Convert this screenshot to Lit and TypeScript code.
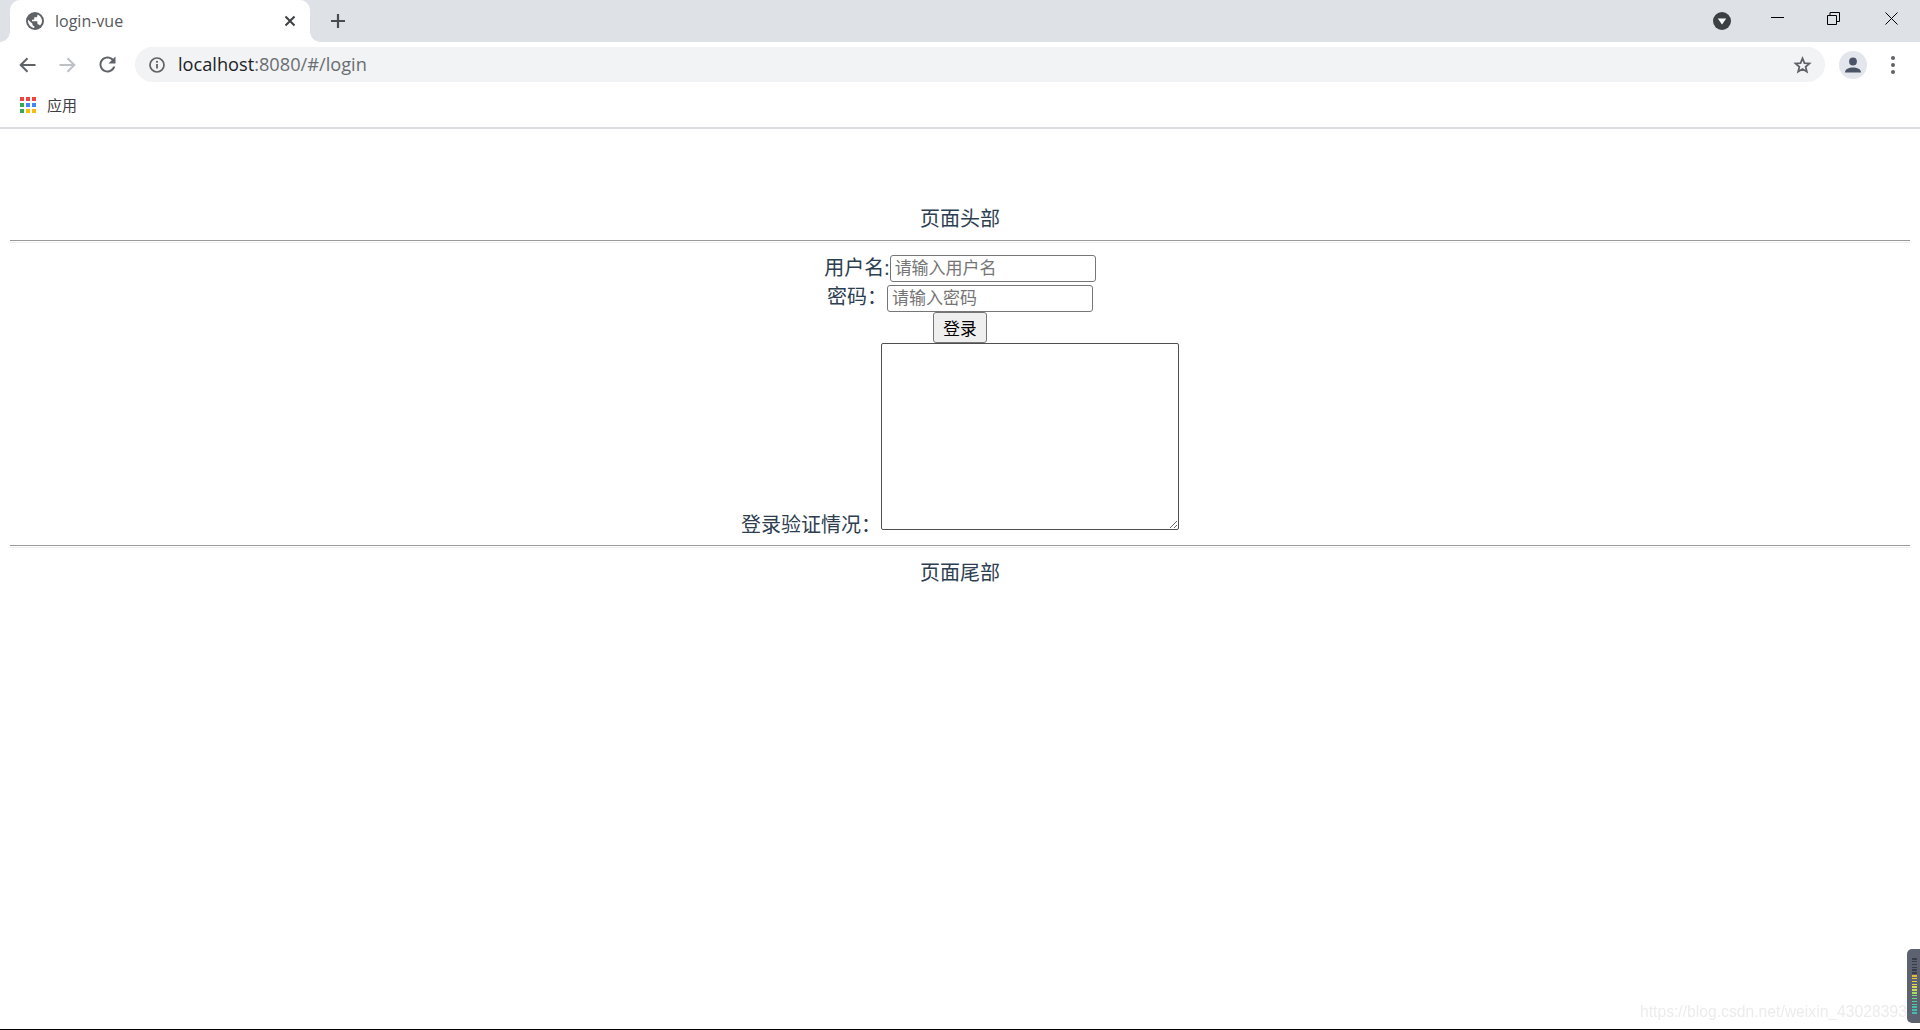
import { LitElement, html, css, svg } from "lit";
import { customElement } from "lit/decorators.js";

const ico = (w: number, h: number, vb: string, body: unknown) =>
  html`<svg width=${w} height=${h} viewBox=${vb} aria-hidden="true">${body}</svg>`;

const GLOBE = svg`<circle cx="12" cy="12" r="12" fill="#5f6368"/><path fill="#fff" d="M11 21.400c-4-.5-8.400-4.900-8.400-9.400 0-.6.1-1.200.2-1.800L8.600 15.500v1c0 1.100 1.200 2.300 2.400 2.300zM18.600 18c-.3-.8-1.500-1.800-2.400-1.800h-1v-3c0-.6-.5-1-1-1H8v-2h2c.6 0 1-.5 1-1V7h2.200c1.100 0 2-.9 2-2V3.300C18.800 4.600 21.400 8 21.400 12c0 2.400-1.100 4.500-2.800 6z"/>`;

const APP_COLORS = ["#ef4444","#ef4444","#ef4444","#34a853","#4285f4","#4285f4","#34a853","#fbbc04","#fbbc04"];

@customElement("app-root")
export class AppRoot extends LitElement {
  static styles = css`
    :host { display: block; position: relative; height: 1030px; overflow: hidden; background: #fff;
      font-family: "Open Sans", "Noto Sans CJK SC", sans-serif; }
    svg { display: block; flex: none; }

    .strip { display: flex; align-items: flex-end; height: 42px; background: #dee1e6; padding-left: 10px; }
    .tab { position: relative; display: flex; align-items: center; width: 300px; height: 42px; box-sizing: border-box;
      padding: 0 14px 0 16px; background: #fff; border-radius: 10px 10px 0 0; }
    .tab::before, .tab::after { content: ""; position: absolute; bottom: 0; width: 10px; height: 10px;
      background: radial-gradient(circle at 100% 0, #dee1e6 9.500px, #fff 10px); }
    .tab::before { left: -10px; transform: scaleX(-1); }
    .tab::after { right: -10px; }
    .tab-title { margin-left: 11px; flex: 1; font-size: 16px; color: #55585d; }
    .new-tab { margin: 0 0 13px 20px; }
    .win { margin-left: auto; display: flex; align-self: flex-start; }
    .dl { margin: 12px 40px 0 0; }
    .min { margin: 17px 43px 0 0; }
    .restore { margin: 12px 45px 0 0; }
    .close { margin: 12px 22px 0 0; }

    .toolbar { display: flex; align-items: center; height: 46px; padding: 0 0 1px 19px; box-sizing: border-box; }
    .nav { margin-right: 23px; }
    .omni { display: flex; align-items: center; width: 1690px; height: 35px; margin-left: -4px; box-sizing: border-box;
      padding: 0 13px 0 14px; background: #f1f3f4; border-radius: 18px; }
    .url { margin: -2px 0 0 13px; flex: 1; font-size: 18.200px; color: #6a6d71; }
    .url b { font-weight: 400; color: #202124; }
    .avatar { display: flex; align-items: center; justify-content: center; width: 28px; height: 28px;
      margin-left: 14px; border-radius: 50%; background: #e3e6ec; }
    .dots { margin-left: 24px; }

    .bookmarks { display: flex; align-items: center; height: 41px; padding: 0 0 6px 20px; box-sizing: border-box;
      border-bottom: 2px solid #dadce0; }
    .apps { display: grid; grid-template-columns: repeat(3, 4px); grid-auto-rows: 4px; gap: 2px 2px; }
    .apps i { display: block; }
    .bm-label { margin-left: 11px; font-size: 15px; color: #3c4043; }

    .page { padding: 0 10px; color: #2c3e50; font-size: 20px; }
    .heading { height: 30px; line-height: 30px; text-align: center; margin-top: 74px; position: relative; top: 1px; }
    .rule { height: 1px; border-top: 1px solid #9a9a9a; border-bottom: 1px solid #eee; }
    .head-rule { margin-top: 7px; }
    .form { display: flex; flex-direction: column; align-items: center; margin-top: 12px; }
    .row { display: flex; align-items: center; }
    .row + .row { margin-top: 3px; }
    .row.btn { margin-top: 0; }
    .row.log { margin-top: 0; align-items: flex-end; }
    label { line-height: 27px; white-space: nowrap; margin-top: -2px; }
    .pw { margin-top: -4px; }
    input { width: 206px; height: 27px; box-sizing: border-box; margin: 0; padding: 0 4px 2px; font: inherit; font-size: 17px;
      border: 1px solid #767676; border-radius: 3px; background: #fff; color: #000; }
    input::placeholder { color: #757575; }
    button { width: 54px; height: 31px; box-sizing: border-box; margin: 0; padding: 0; font: inherit; font-size: 16.670px;
      border: 1px solid #767676; border-radius: 3px; background: #efefef; color: #000; }
    textarea { width: 298px; height: 187px; box-sizing: border-box; margin: 0; padding: 2px; border: 1px solid #4f4f4f;
      border-radius: 2px; background: #fff; }
    .row.log label { margin: 0 0 -8px 0; }
    .foot-rule { margin-top: 15px; }
    .footing { height: 30px; line-height: 30px; text-align: center; margin-top: 10px; }

    .watermark { position: absolute; left: 1640px; top: 1001px; font: 15.700px/22px "Liberation Sans", sans-serif;
      color: #ececec; white-space: nowrap; filter: blur(.4px); }
    .meter { position: absolute; right: 0; top: 949px; display: flex; flex-direction: column; gap: 1.350px; width: 13px; height: 74px;
      box-sizing: border-box; padding: 9px 3px 0 5px; background: #5d6270; border-radius: 5px 0 0 5px; }
    .meter i { display: block; height: 1.500px; flex: none; }
    .baseline { position: absolute; left: 0; right: 0; bottom: 0; height: 1px; background: #000; }
  `;

  private meter() {
    const cols = ["#3a3d47","#3a3d47","#3a3d47","#3a3d47","#3a3d47","#3a3d47","#e8b93a","#e8c53a","#e6cf40","#e2d848","#d8dc50","#c6de58","#a8dc60","#88da70","#6cd680","#58d090","#4cc8a0","#44c0a8","#44bcb0","#44bcb0"];
    return cols.map((c) => html`<i style="background:${c}"></i>`);
  }

  render() {
    return html`
      <div class="strip">
        <div class="tab">
          ${ico(18, 18, "0 0 24 24", GLOBE)}
          <span class="tab-title">login-vue</span>
          ${ico(12, 12, "0 0 12 12", svg`<path d="M1.500 1.500l9 9m0-9l-9 9" stroke="#3c4043" stroke-width="2" fill="none"/>`)}
        </div>
        <div class="new-tab">${ico(16, 16, "0 0 16 16", svg`<path d="M8 1v14M1 8h14" stroke="#494c50" stroke-width="2.200" fill="none"/>`)}</div>
        <div class="win">
          <div class="dl">${ico(18, 18, "0 0 18 18", svg`<circle cx="9" cy="9" r="9" fill="#3c4043"/><path d="M4.800 6.500h8.400L9 12.500z" fill="#fff"/>`)}</div>
          <div class="min">${ico(13, 1, "0 0 13 1", svg`<path d="M0 .5h13" stroke="#000"/>`)}</div>
          <div class="restore">${ico(13, 13, "0 0 13 13", svg`<path d="M.5 3.500h9v9h-9zM3 3.500V.5h9.500v9H9.500" stroke="#000" fill="none"/>`)}</div>
          <div class="close">${ico(13, 13, "0 0 13 13", svg`<path d="M.5.5l12 12m0-12l-12 12" stroke="#000" fill="none"/>`)}</div>
        </div>
      </div>

      <div class="toolbar">
        <div class="nav">${ico(17, 16, "0 0 17 16", svg`<path d="M16.500 8H2M8.500 1.200L1.700 8l6.800 6.800" stroke="#5f6368" stroke-width="2" fill="none"/>`)}</div>
        <div class="nav">${ico(17, 16, "0 0 17 16", svg`<path d="M.5 8H15M8.500 1.200L15.300 8l-6.800 6.800" stroke="#bdc1c6" stroke-width="2" fill="none"/>`)}</div>
        <div class="nav">${ico(17, 17, "3.500 3.500 17 17", svg`<path fill="#5f6368" d="M17.650 6.350C16.200 4.900 14.210 4 12 4c-4.420 0-7.990 3.580-7.990 8s3.570 8 7.990 8c3.730 0 6.840-2.550 7.730-6h-2.080c-.82 2.330-3.040 4-5.650 4-3.310 0-6-2.690-6-6s2.690-6 6-6c1.660 0 3.140.69 4.220 1.780L13 11h7V4l-2.350 2.350z"/>`)}</div>
        <div class="omni">
          ${ico(16, 16, "0 0 16 16", svg`<circle cx="8" cy="8" r="7" fill="none" stroke="#5f6368" stroke-width="1.700"/><path d="M8 7v4.500" stroke="#5f6368" stroke-width="1.800"/><circle cx="8" cy="4.800" r="1.100" fill="#5f6368"/>`)}
          <span class="url"><b>localhost</b>:8080/#/login</span>
          ${ico(19, 18, "0 0 24 24", svg`<path fill="none" stroke="#5f6368" stroke-width="2.400" stroke-linejoin="miter" d="M12 3.200l2.600 6.200 6.700.55-5.100 4.400 1.550 6.550L12 17.400l-5.750 3.500L7.800 14.350l-5.100-4.400 6.700-.55z"/>`)}
        </div>
        <div class="avatar">${ico(16, 16, "0 0 16 16", svg`<circle cx="8" cy="4.500" r="3.900" fill="#4c5567"/><path d="M0 15.500c0-3.600 4-5 8-5s8 1.400 8 5z" fill="#4c5567"/>`)}</div>
        <div class="dots">${ico(4, 18, "0 0 4 18", svg`<g fill="#5f6368"><circle cx="2" cy="2" r="2"/><circle cx="2" cy="9" r="2"/><circle cx="2" cy="16" r="2"/></g>`)}</div>
      </div>

      <div class="bookmarks">
        <div class="apps">${APP_COLORS.map((c) => html`<i style="background:${c}"></i>`)}</div>
        <span class="bm-label">应用</span>
      </div>

      <div class="page">
        <div class="heading">页面头部</div>
        <div class="rule head-rule"></div>
        <div class="form">
          <div class="row"><label>用户名:</label><input placeholder="请输入用户名" /></div>
          <div class="row"><label class="pw">密码：</label><input placeholder="请输入密码" /></div>
          <div class="row btn"><button>登录</button></div>
          <div class="row log"><label>登录验证情况：</label><textarea></textarea></div>
        </div>
        <div class="rule foot-rule"></div>
        <div class="footing">页面尾部</div>
      </div>

      <div class="watermark">https://blog.csdn.net/weixin_43028393</div>
      <div class="meter">${this.meter()}</div>
      <div class="baseline"></div>
    `;
  }
}
